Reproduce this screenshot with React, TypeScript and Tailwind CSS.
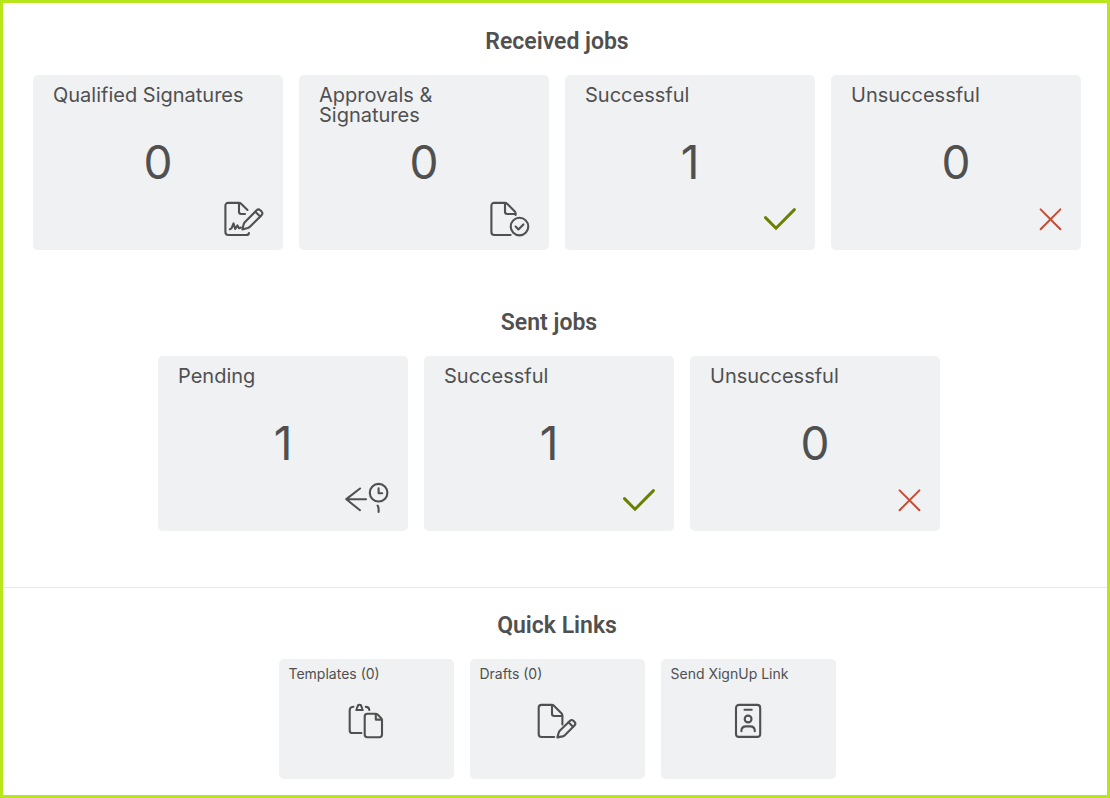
import React from 'react'

interface JobCard {
  label: string
  count: number
  icon: React.ReactNode
}

interface QuickLink {
  label: string
  icon: React.ReactNode
}

function Icon({ width = 40, stroke = 2.1, className = '', children }: {
  width?: number
  stroke?: number
  className?: string
  children: React.ReactNode
}) {
  return (
    <svg
      width={width}
      height={36}
      viewBox={`0 0 ${width} 36`}
      fill="none"
      stroke="currentColor"
      strokeWidth={stroke}
      strokeLinecap="round"
      strokeLinejoin="round"
      className={`overflow-visible ${className}`}
      aria-hidden="true"
    >
      {children}
    </svg>
  )
}

const SignIcon = () => (
  <Icon>
    <path d="M24.5 9 18.4 3Q17.2 1.9 15.6 1.9H5.3Q2.4 1.9 2.4 4.8V31Q2.4 34 5.3 34H23.5Q25.6 34 26 32" />
    <path d="M16 2V10.8Q16 13 18.2 13H22" />
    <path d="M6.8 28.3Q8.8 28 9.3 25.4L10.5 22.4 12.2 28 14.5 24.4 16 27.2 18 26.6" />
    <path d="M19.4 28.4 20.6 23.4Q21 22 22 21L33.6 9.3Q35.4 7.6 37.2 9.2L38.6 10.6Q40.3 12.4 38.5 14.2L26.9 25.8Q26 26.7 24.7 27.1Z" />
    <path d="M32.3 10.7 37.2 15.5" />
  </Icon>
)

const ApproveIcon = () => (
  <Icon>
    <path d="M26.6 14V12.6Q26.6 11.2 25.6 10.2L18.4 3Q17.2 1.9 15.6 1.9H5.3Q2.4 1.9 2.4 4.8V31Q2.4 34 5.3 34H21.6" />
    <path d="M16 2V10.8Q16 13 18.2 13H26.4" />
    <circle cx="30.5" cy="25.6" r="8.8" />
    <path d="M26.6 25.6 29.4 28.4 34.4 23.4" />
  </Icon>
)

const CheckIcon = () => (
  <Icon stroke={3} className="text-[#6b7f00]">
    <path d="M10.5 16.6 21 27.2 39.4 8.6" strokeLinejoin="miter" />
  </Icon>
)

const CrossIcon = () => (
  <Icon stroke={2} className="text-[#c54b35]">
    <path d="M19.6 8.4 39.4 28.2M39.4 8.4 19.6 28.2" />
  </Icon>
)

const PendingIcon = () => (
  <Icon width={44}>
    <path d="M16 6.5 2.3 17.2 16 28.2M2.3 17.2H22" />
    <circle cx="34.6" cy="10.7" r="8.8" />
    <path d="M34.6 6.4V11.3H38.2" />
    <path d="M33.6 23.6Q34.6 25 34.6 27V30" />
  </Icon>
)

const TemplatesIcon = () => (
  <Icon width={39}>
    <path d="M6.4 3.8Q2.7 4 2.7 7.4V27.4Q2.7 30 5.4 30H14.4" />
    <path d="M9.2 7H15.8M9.8 6.6Q9.6 4.4 10.6 3.8 10.6 1.7 12.5 1.7T14.4 3.8Q15.4 4.4 15.2 6.6" />
    <path d="M18.8 3.9Q22 4 22.3 7" />
    <path d="M28.4 10.8H20.4Q17.7 10.8 17.7 13.5V31.6Q17.7 34.3 20.4 34.3H32.3Q35 34.3 35 31.6V17.4Q35 16 34 15L30.6 11.6Q29.8 10.8 28.4 10.8Z" />
    <path d="M28.8 11V16.6H34.8" />
  </Icon>
)

const DraftsIcon = () => (
  <Icon width={39}>
    <path d="M24.4 21.4V12.6Q24.4 11.2 23.4 10.2L16.2 3Q15.1 1.9 13.6 1.9H3.5Q.7 1.9.7 4.8V31Q.7 34 3.5 34H16.2" />
    <path d="M14 2V10.8Q14 13 16.2 13H24.2" />
    <path d="M19.4 34.4 20.6 30Q21 28.6 22 27.6L31.8 17.9Q33.6 16.2 35.4 17.8L36.6 19Q38.2 20.8 36.5 22.6L26.8 32.2Q25.9 33.1 24.6 33.4Z" />
    <path d="M30.5 19.3 35 23.8" />
  </Icon>
)

const BadgeIcon = () => (
  <Icon width={39}>
    <rect x="7" y="1.9" width="24.2" height="32" rx="3" />
    <path d="M15.5 6.7H22.7" />
    <circle cx="19.1" cy="16" r="3.4" />
    <path d="M12.4 28.2Q12.4 23.4 17 23.4H21.2Q25.8 23.4 25.8 28.2" />
  </Icon>
)

const receivedJobs: JobCard[] = [
  { label: 'Qualified Signatures', count: 0, icon: <SignIcon /> },
  { label: 'Approvals & Signatures', count: 0, icon: <ApproveIcon /> },
  { label: 'Successful', count: 1, icon: <CheckIcon /> },
  { label: 'Unsuccessful', count: 0, icon: <CrossIcon /> },
]

const sentJobs: JobCard[] = [
  { label: 'Pending', count: 1, icon: <PendingIcon /> },
  { label: 'Successful', count: 1, icon: <CheckIcon /> },
  { label: 'Unsuccessful', count: 0, icon: <CrossIcon /> },
]

const quickLinks: QuickLink[] = [
  { label: 'Templates (0)', icon: <TemplatesIcon /> },
  { label: 'Drafts (0)', icon: <DraftsIcon /> },
  { label: 'Send XignUp Link', icon: <BadgeIcon /> },
]

function SectionTitle({ children }: { children: React.ReactNode }) {
  return (
    <h2 className="text-center font-[Roboto,sans-serif] text-[23px] leading-[34px] font-semibold">
      {children}
    </h2>
  )
}

function JobCards({ jobs }: { jobs: JobCard[] }) {
  return (
    <div className="flex flex-wrap justify-center gap-4">
      {jobs.map((job) => (
        <a
          key={job.label}
          href="#"
          className="flex h-[175px] w-[250px] flex-col rounded-[5px] bg-[#eff1f3] px-5 pt-2.5"
        >
          <span className="h-10 text-xl leading-5">{job.label}</span>
          <span className="text-center text-[46px] leading-[74px]">{job.count}</span>
          <span className="mt-0.5 flex justify-end">{job.icon}</span>
        </a>
      ))}
    </div>
  )
}

export default function App() {
  return (
    <main className="min-h-screen border-3 border-[#b8e61c] bg-white pb-4 font-[Inter,sans-serif] text-[#505050]">
      <section className="flex flex-col gap-4 pt-[22px] pl-1">
        <SectionTitle>Received jobs</SectionTitle>
        <JobCards jobs={receivedJobs} />
      </section>

      <section className="mb-14 flex flex-col gap-4 pt-14 pr-3">
        <SectionTitle>Sent jobs</SectionTitle>
        <JobCards jobs={sentJobs} />
      </section>

      <section className="flex flex-col gap-4 border-t border-[#e6e8e9] pt-[21px] pl-1">
        <SectionTitle>Quick Links</SectionTitle>
        <nav className="flex flex-wrap justify-center gap-4">
          {quickLinks.map((link) => (
            <a
              key={link.label}
              href="#"
              className="flex h-[120px] w-[175px] flex-col rounded-[5px] bg-[#eff1f3] px-2.5 pt-[5px]"
            >
              <span className="text-sm leading-5">{link.label}</span>
              <span className="mt-[19px] flex justify-center">{link.icon}</span>
            </a>
          ))}
        </nav>
      </section>
    </main>
  )
}
